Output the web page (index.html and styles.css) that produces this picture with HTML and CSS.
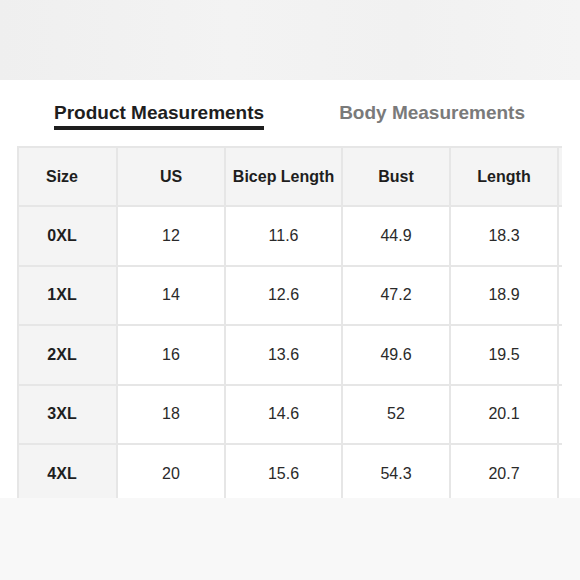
FILE: index.html
```html
<!DOCTYPE html>
<html>
<head>
<meta charset="utf-8">
<link rel="stylesheet" href="styles.css">
</head>
<body>
<div class="page">
  <div class="band-top"></div>
  <div class="sheet">
    <div class="tabs">
      <div class="tab active">Product Measurements</div>
      <div class="tab">Body Measurements</div>
    </div>
    <div class="table-clip">
      <div class="grid">
        <div class="c h f">Size</div><div class="c h">US</div><div class="c h">Bicep Length</div><div class="c h">Bust</div><div class="c h">Length</div><div class="c h"></div>
        <div class="c f">0XL</div><div class="c">12</div><div class="c">11.6</div><div class="c">44.9</div><div class="c">18.3</div><div class="c"></div>
        <div class="c f">1XL</div><div class="c">14</div><div class="c">12.6</div><div class="c">47.2</div><div class="c">18.9</div><div class="c"></div>
        <div class="c f">2XL</div><div class="c">16</div><div class="c">13.6</div><div class="c">49.6</div><div class="c">19.5</div><div class="c"></div>
        <div class="c f">3XL</div><div class="c">18</div><div class="c">14.6</div><div class="c">52</div><div class="c">20.1</div><div class="c"></div>
        <div class="c f">4XL</div><div class="c">20</div><div class="c">15.6</div><div class="c">54.3</div><div class="c">20.7</div><div class="c"></div>
      </div>
    </div>
  </div>
  <div class="band-bottom"></div>
</div>
</body>
</html>
```

FILE: styles.css
```css
html, body {
  margin: 0;
  padding: 0;
}
body {
  width: 580px;
  height: 580px;
  overflow: hidden;
  font-family: "Liberation Sans", Arial, sans-serif;
  background: #f7f7f7;
}
.page {
  display: flex;
  flex-direction: column;
  width: 580px;
  height: 580px;
}
.band-top {
  height: 80px;
  background: linear-gradient(90deg, #efefef 0%, #f3f3f3 40%, #f1f1f1 70%, #f4f4f4 100%);
}
.sheet {
  height: 418px;
  background: #ffffff;
  overflow: hidden;
}
.tabs {
  display: flex;
  height: 66px;
  align-items: flex-start;
}
.tab {
  font-size: 19px;
  font-weight: bold;
  color: #7a7a7a;
  padding-top: 22px;
  line-height: 22px;
}
.tab.active {
  color: #1e1e1e;
  margin-left: 54px;
  border-bottom: 4px solid #1e1e1e;
  padding-bottom: 2px;
}
.tab:not(.active) {
  margin-left: 75px;
}
.table-clip {
  margin-left: 17px;
  width: 545px;
  overflow: hidden;
}
.grid {
  display: grid;
  grid-template-columns: 99px 108px 117px 108px 108px 108px;
  grid-auto-rows: 59.4px;
  width: 650px;
  border-top: 2px solid #e6e6e6;
  border-left: 2px solid #e6e6e6;
  box-sizing: border-box;
}
.c {
  display: flex;
  align-items: center;
  justify-content: center;
  border-right: 2px solid #e6e6e6;
  border-bottom: 2px solid #e6e6e6;
  font-size: 16px;
  color: #2a2a2a;
  background: #ffffff;
}
.c.h {
  background: #f4f4f4;
  font-weight: bold;
  color: #1e1e1e;
}
.c.f {
  background: #f4f4f4;
  font-weight: bold;
  color: #1e1e1e;
  padding-right: 11px;
}
.band-bottom {
  flex: 1;
  background: #f8f8f8;
}
```
